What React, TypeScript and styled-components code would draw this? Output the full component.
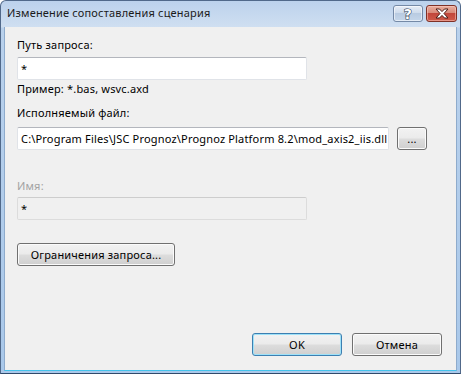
import styled, { createGlobalStyle } from "styled-components";

// globals

const GlobalStyle = createGlobalStyle`
  html, body {
    margin: 0;
    padding: 0;
    width: 461px;
    height: 374px;
    overflow: hidden;
    background: #ffffff;
  }
  body {
    font-family: "Noto Sans", "Open Sans", sans-serif;
    font-size: 11px;
    letter-spacing: 0.18px;
    color: #000000;
  }
  * {
    box-sizing: border-box;
  }
`;

// window frame

const Window = styled.div`
  width: 461px;
  height: 374px;
  display: flex;
  flex-direction: column;
  border: 1px solid #51698a;
  border-bottom-color: #2f4a6b;
  border-radius: 6px 6px 0 0;
  padding: 0 3px 2px 3px;
  background: linear-gradient(
    to bottom,
    #bcd2ec 0,
    #cfdff1 26px,
    #b9d1ec 27px,
    #a9c8ea 100%
  );
`;

const TitleBar = styled.div`
  height: 26px;
  flex-shrink: 0;
  display: flex;
  align-items: flex-start;
  justify-content: space-between;
  padding: 4px 0 0 3px;
`;

const Title = styled.div`
  line-height: 15px;
  color: #1b1b1b;
  white-space: nowrap;
`;

const CaptionButtons = styled.div`
  display: flex;
  gap: 3px;
`;

const CaptionButton = styled.div<{ $kind: "help" | "close" }>`
  width: ${(p) => (p.$kind === "close" ? 31 : 30)}px;
  height: 17px;
  border-radius: 3px;
  border: 1px solid ${(p) => (p.$kind === "close" ? "#7f3127" : "#7489a6")};
  background: ${(p) =>
    p.$kind === "close"
      ? "linear-gradient(to bottom, #e9ad9e 0%, #d88b7a 45%, #c2473b 50%, #cf5a49 100%)"
      : "linear-gradient(to bottom, #e6edf6 0%, #cfdcec 45%, #b9cbe1 50%, #c5d6ea 100%)"};
  box-shadow: inset 0 0 0 1px
    ${(p) => (p.$kind === "close" ? "rgba(255,210,200,0.5)" : "rgba(255,255,255,0.55)")};
  display: flex;
  align-items: center;
  justify-content: center;
`;

const Client = styled.div`
  flex: 1;
  display: flex;
  flex-direction: column;
  background: #f0f0f0;
  border: 1px solid #8eabcc;
  border-top: none;
  border-bottom-color: #43c3ec;
  padding: 10px 14px 14px 12px;
`;

// form parts

const Label = styled.div<{ $gap?: number; $disabled?: boolean }>`
  line-height: 15px;
  margin-top: ${(p) => p.$gap ?? 0}px;
  color: ${(p) => (p.$disabled ? "#a3a3a3" : "#000000")};
`;

const Hint = styled.div`
  line-height: 15px;
  margin-top: 1px;
`;

const FieldRow = styled.div<{ $gap: number }>`
  display: flex;
  align-items: center;
  gap: 8px;
  margin-top: ${(p) => p.$gap}px;
`;

const TextBox = styled.div<{ $width: number; $disabled?: boolean }>`
  width: ${(p) => p.$width}px;
  height: 23px;
  padding: 0 3px;
  line-height: 21px;
  white-space: nowrap;
  overflow: hidden;
  border-radius: 2px;
  border: 1px solid ${(p) => (p.$disabled ? "#dcdcdc" : "#e0e3e8")};
  border-top-color: ${(p) => (p.$disabled ? "#cdcdcd" : "#b3b6bd")};
  background: ${(p) => (p.$disabled ? "#f0f0f0" : "#ffffff")};
`;

const Button = styled.div<{ $width: number; $default?: boolean; $gap?: number }>`
  width: ${(p) => p.$width}px;
  height: 23px;
  margin-top: ${(p) => p.$gap ?? 0}px;
  display: flex;
  align-items: center;
  justify-content: center;
  line-height: 15px;
  white-space: nowrap;
  border-radius: 3px;
  border: 1px solid ${(p) => (p.$default ? "#3c7fb1" : "#707070")};
  background: linear-gradient(
    to bottom,
    #f2f2f2 0%,
    #ebebeb 48%,
    #dddddd 52%,
    #cfcfcf 100%
  );
  box-shadow: inset 0 0 0 1px ${(p) => (p.$default ? "#9ee1f8" : "#fbfbfb")};
`;

const Spacer = styled.div`
  flex: 1;
`;

const Footer = styled.div`
  display: flex;
  justify-content: flex-end;
  gap: 10px;
`;

// icons

function HelpGlyph() {
  return (
    <svg width="14" height="15" viewBox="0 0 14 15">
      <text
        x="7"
        y="13"
        textAnchor="middle"
        fontFamily="DejaVu Sans, sans-serif"
        fontWeight="bold"
        fontSize="14"
        fill="#ffffff"
        stroke="#34465c"
        strokeWidth="1.2"
        paintOrder="stroke"
      >
        ?
      </text>
    </svg>
  );
}

function CloseGlyph() {
  return (
    <svg width="14" height="11" viewBox="0 0 14 11">
      <polygon
        points="1,1 4.5,1 7,3.6 9.5,1 13,1 9,5.5 13,10 9.5,10 7,7.4 4.5,10 1,10 5,5.5"
        fill="#ffffff"
        stroke="#4b1b15"
        strokeWidth="1"
        strokeLinejoin="round"
      />
    </svg>
  );
}

// main app

function App() {
  return (
    <>
      <GlobalStyle />
      <Window>
        <TitleBar>
          <Title>Изменение сопоставления сценария</Title>
          <CaptionButtons>
            <CaptionButton $kind="help">
              <HelpGlyph />
            </CaptionButton>
            <CaptionButton $kind="close">
              <CloseGlyph />
            </CaptionButton>
          </CaptionButtons>
        </TitleBar>

        <Client>
          <Label>Путь запроса:</Label>
          <FieldRow $gap={5}>
            <TextBox $width={290}>*</TextBox>
          </FieldRow>
          <Hint>Пример: *.bas, wsvc.axd</Hint>

          <Label $gap={9}>Исполняемый файл:</Label>
          <FieldRow $gap={7}>
            <TextBox $width={372}>
              C:\Program Files\JSC Prognoz\Prognoz Platform 8.2\mod_axis2_iis.dll
            </TextBox>
            <Button $width={30}>...</Button>
          </FieldRow>

          <Label $gap={28} $disabled>
            Имя:
          </Label>
          <FieldRow $gap={4}>
            <TextBox $width={290} $disabled>
              *
            </TextBox>
          </FieldRow>

          <Button $width={158} $gap={23}>
            Ограничения запроса...
          </Button>

          <Spacer />

          <Footer>
            <Button $width={90} $default>
              OK
            </Button>
            <Button $width={90}>Отмена</Button>
          </Footer>
        </Client>
      </Window>
    </>
  );
}

export default App;
